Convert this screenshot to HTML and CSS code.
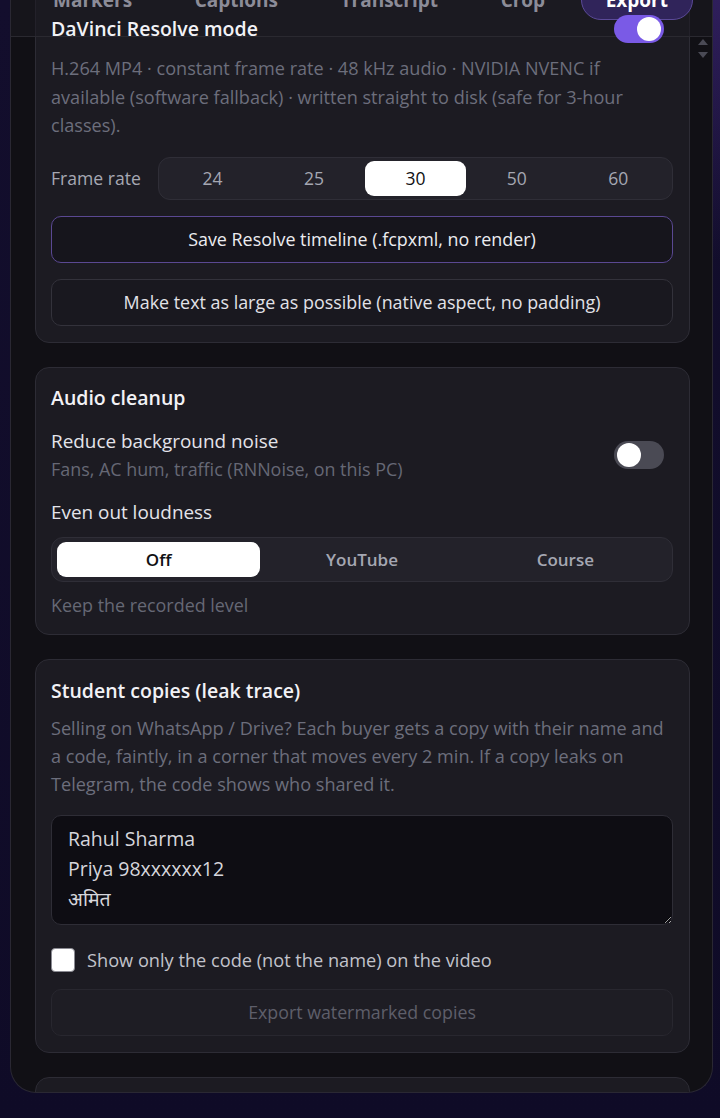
FILE: index.html
```html
<!DOCTYPE html>
<html lang="en">
<head>
<meta charset="utf-8">
<title>Export</title>
<link rel="stylesheet" href="styles.css">
</head>
<body>
<div class="app">
  <nav class="tabs">
    <span class="tab">Markers</span>
    <span class="tab">Captions</span>
    <span class="tab">Transcript</span>
    <span class="tab">Crop</span>
    <span class="tab active">Export</span>
  </nav>
  <div class="scrollbar"><span class="arrow up"></span><span class="arrow down"></span></div>
  <main class="content">
    <section class="card card-first">
      <div class="head-row">
        <h2 class="card-title">DaVinci Resolve mode</h2>
        <span class="toggle on"><span class="knob"></span></span>
      </div>
      <p class="desc desc-first">H.264 MP4 · constant frame rate · 48 kHz audio · NVIDIA NVENC if available (software fallback) · written straight to disk (safe for 3-hour classes).</p>
      <div class="fr-row">
        <span class="fr-label">Frame rate</span>
        <div class="seg seg-five">
          <span class="seg-item">24</span>
          <span class="seg-item">25</span>
          <span class="seg-item selected">30</span>
          <span class="seg-item">50</span>
          <span class="seg-item">60</span>
        </div>
      </div>
      <button class="btn btn-accent">Save Resolve timeline (.fcpxml, no render)</button>
      <button class="btn btn-plain">Make text as large as possible (native aspect, no padding)</button>
    </section>

    <section class="card">
      <h2 class="card-title">Audio cleanup</h2>
      <div class="opt-row">
        <div class="opt-text">
          <div class="opt-title">Reduce background noise</div>
          <div class="opt-sub">Fans, AC hum, traffic (RNNoise, on this PC)</div>
        </div>
        <span class="toggle"><span class="knob"></span></span>
      </div>
      <div class="opt-title loud-title">Even out loudness</div>
      <div class="seg seg-three">
        <span class="seg-item selected">Off</span>
        <span class="seg-item">YouTube</span>
        <span class="seg-item">Course</span>
      </div>
      <div class="hint">Keep the recorded level</div>
    </section>

    <section class="card card-students">
      <h2 class="card-title">Student copies (leak trace)</h2>
      <p class="desc desc-students">Selling on WhatsApp / Drive? Each buyer gets a copy with their name and a code, faintly, in a corner that moves every 2 min. If a copy leaks on Telegram, the code shows who shared it.</p>
      <textarea class="names" rows="3">Rahul Sharma
Priya 98xxxxxx12
अमित</textarea>
      <label class="check">
        <span class="box"></span>
        <span class="check-label">Show only the code (not the name) on the video</span>
      </label>
      <button class="btn btn-disabled" disabled>Export watermarked copies</button>
    </section>

    <section class="card card-stub"></section>
  </main>
</div>
</body>
</html>
```

FILE: styles.css
```css
* { box-sizing: border-box; }

html, body {
  margin: 0;
  height: 1118px;
  overflow: hidden;
}

body {
  background:
    radial-gradient(circle at 100% 0%, rgba(70, 44, 130, 0.55) 0, rgba(70, 44, 130, 0) 260px),
    linear-gradient(180deg, #130e2d 0%, #0f0b27 100%);
  font-family: "Open Sans", "Noto Sans", "Noto Sans Devanagari", sans-serif;
  color: #e4e4ea;
}

.app {
  position: relative;
  margin-left: 10px;
  width: 703px;
  height: 1093px;
  background: #111015;
  border: 1px solid #2a2833;
  border-top: none;
  border-radius: 0 0 26px 26px;
  overflow: hidden;
}

/* tabs header */
.tabs {
  position: relative;
  z-index: 1;
  margin-top: -24px;
  height: 61px;
  padding: 4px 19px 16px 15px;
  display: flex;
  justify-content: space-between;
  align-items: center;
  background: rgba(27, 26, 33, 0.55);
  border-bottom: 1px solid #2a2930;
}

.tab {
  height: 40px;
  padding: 0 26px;
  display: flex;
  align-items: center;
  font-size: 19px;
  font-weight: 700;
  color: #8c8c98;
  border: 1px solid transparent;
  border-radius: 20px;
}

.tab.active {
  color: #ffffff;
  background: #30245a;
  border-color: #5b4a98;
  padding: 0 24px;
}

.scrollbar {
  position: absolute;
  right: 4px;
  top: 39px;
  width: 10px;
  z-index: 3;
  display: flex;
  flex-direction: column;
  align-items: center;
  gap: 7px;
}

.arrow {
  width: 0;
  height: 0;
  border-left: 5px solid transparent;
  border-right: 5px solid transparent;
}
.arrow.up { border-bottom: 6px solid #4a4a55; }
.arrow.down { border-top: 6px solid #4a4a55; }

/* scroll content */
.content {
  padding: 0 22px 0 24px;
  display: flex;
  flex-direction: column;
  gap: 24px;
}

.card {
  background: #1c1b22;
  border: 1px solid #2d2c35;
  border-radius: 14px;
  padding: 16px 16px 16px 15px;
  display: flex;
  flex-direction: column;
}

.card-first {
  position: relative;
  margin-top: -57px;
  padding-top: 33px;
}

.card-students { padding-top: 17px; }

.card-stub {
  height: 60px;
  flex-shrink: 0;
}

.card-title {
  margin: 0;
  font-size: 19.5px;
  line-height: 28px;
  font-weight: 600;
  color: #f2f2f6;
}

.head-row {
  position: relative;
  z-index: 2;
  display: flex;
  justify-content: space-between;
  align-items: center;
  height: 29px;
  padding-right: 9px;
}

.toggle {
  position: relative;
  z-index: 2;
  width: 50px;
  height: 28px;
  border-radius: 14px;
  background: #4a4a54;
  display: flex;
  align-items: center;
  padding: 0 3px;
  flex-shrink: 0;
}
.toggle.on {
  background: #7a5ae6;
  justify-content: flex-end;
}
.knob {
  width: 24px;
  height: 24px;
  border-radius: 50%;
  background: #ffffff;
}

.desc {
  margin: 0;
  font-size: 18.1px;
  line-height: 28.5px;
  color: #6c6e7c;
}
.desc-first { margin-top: 11px; }
.desc-students { margin-top: 9px; line-height: 28px; }

.fr-row {
  margin-top: 17px;
  display: flex;
  align-items: center;
  gap: 17px;
}
.fr-label {
  font-size: 17.6px;
  color: #a6a8b3;
  white-space: nowrap;
}

.seg {
  display: grid;
  background: #23222a;
  border: 1px solid #2f2e37;
  border-radius: 12px;
}
.seg-five {
  flex: 1;
  grid-template-columns: repeat(5, 1fr);
  height: 43px;
  padding: 3px;
}
.seg-three {
  margin-top: 12px;
  grid-template-columns: repeat(3, 1fr);
  height: 45px;
  padding: 4px 5px;
}
.seg-item {
  display: flex;
  align-items: center;
  justify-content: center;
  font-size: 17.5px;
  color: #a5a7b2;
  border-radius: 9px;
}
.seg-three .seg-item { font-weight: 600; font-size: 17px; }
.seg-item.selected {
  background: #ffffff;
  color: #111114;
}

.btn {
  display: block;
  width: 100%;
  height: 47px;
  margin-top: 16px;
  font-family: inherit;
  font-size: 17.9px;
  border-radius: 10px;
  text-align: center;
  cursor: pointer;
}
.btn-accent {
  background: #16151c;
  border: 1.5px solid #5a4892;
  color: #ececf0;
}
.btn-plain {
  background: #19181f;
  border: 1px solid #33323b;
  color: #e2e2e8;
}
.btn-disabled {
  height: 47px;
  font-size: 17.8px;
  background: #1e1d24;
  border: 1px solid #28272f;
  color: #5e5f6a;
}

.opt-row {
  margin-top: 16px;
  display: flex;
  align-items: center;
  justify-content: space-between;
  padding-right: 9px;
}
.opt-title {
  font-size: 18.9px;
  line-height: 26px;
  color: #e4e4ea;
}
.opt-sub {
  margin-top: 2px;
  font-size: 17.9px;
  line-height: 26px;
  color: #666875;
}
.loud-title { margin-top: 17px; }

.hint {
  margin-top: 10px;
  font-size: 17.9px;
  line-height: 26px;
  color: #666875;
}

.names {
  display: block;
  margin-top: 17px;
  width: 100%;
  height: 110px;
  padding: 8px 16px;
  background: #0e0d13;
  border: 1px solid #2e2d36;
  border-radius: 10px;
  color: #d6d6dc;
  font-family: inherit;
  font-size: 19.5px;
  line-height: 30px;
  resize: vertical;
  outline: none;
}

.check {
  margin-top: 22px;
  display: flex;
  align-items: center;
  gap: 12px;
  height: 26px;
}
.box {
  width: 24px;
  height: 24px;
  border-radius: 4px;
  background: #ffffff;
  border: 1px solid #8a8a92;
  flex-shrink: 0;
}
.check-label {
  font-size: 18.2px;
  color: #c2c3cb;
}
```
